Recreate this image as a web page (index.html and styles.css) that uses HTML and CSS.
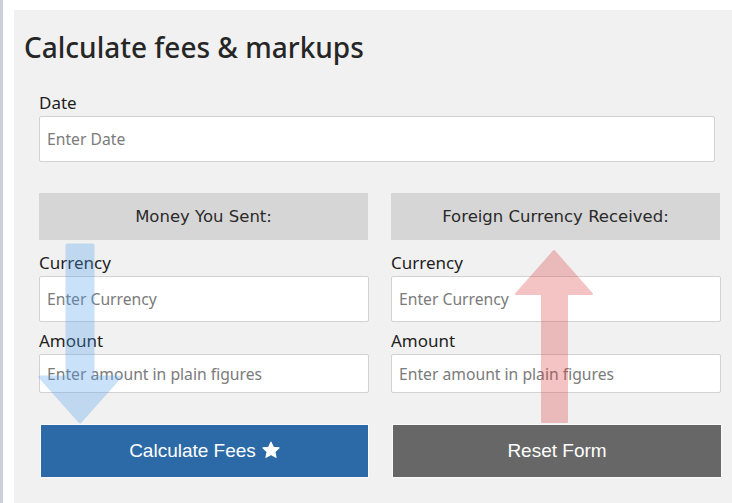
FILE: index.html
```html
<!DOCTYPE html>
<html lang="en">
<head>
    <meta charset="UTF-8">
    <meta name="viewport" content="width=device-width, initial-scale=1.0">
    <title>Calculate fees &amp; markups</title>
    <link rel="stylesheet" href="styles.css">
</head>
<body>
    <div class="side-bar"></div>
    <div class="page">
        <div class="panel">
            <h1>Calculate fees &amp; markups</h1>
            <form class="fee-form">
                <div class="date-group">
                    <label for="date">Date</label>
                    <input type="text" id="date" class="date-input" placeholder="Enter Date">
                </div>

                <div class="columns">
                    <div class="column">
                        <div class="column-head">Money You Sent:</div>
                        <label for="sentCurrency">Currency</label>
                        <input type="text" id="sentCurrency" class="field-tall" placeholder="Enter Currency">
                        <label for="sentAmount">Amount</label>
                        <input type="text" id="sentAmount" class="field-short" placeholder="Enter amount in plain figures">
                        <button type="submit" class="btn btn-primary">
                            Calculate Fees
                            <svg class="star" width="18" height="18" viewBox="0 0 24 24">
                                <polygon points="12,1.5 15.2,8.4 22.8,9.2 17.1,14.3 18.7,21.8 12,17.9 5.3,21.8 6.9,14.3 1.2,9.2 8.8,8.4" fill="white" stroke="white" stroke-width="1.5" stroke-linejoin="round"/>
                            </svg>
                        </button>
                    </div>
                    <div class="column">
                        <div class="column-head">Foreign Currency Received:</div>
                        <label for="recCurrency">Currency</label>
                        <input type="text" id="recCurrency" class="field-tall" placeholder="Enter Currency">
                        <label for="recAmount">Amount</label>
                        <input type="text" id="recAmount" class="field-short" placeholder="Enter amount in plain figures">
                        <button type="reset" class="btn btn-grey">Reset Form</button>
                    </div>
                </div>
            </form>
        </div>
    </div>

    <!-- annotation arrows drawn over the form -->
    <svg class="arrow arrow-down" width="90" height="190" viewBox="0 0 90 190">
        <path d="M29 3 H55 V135 H82 L42 180 L2 135 H29 Z" fill="rgb(80,160,240)" stroke="rgb(80,160,240)" stroke-width="3" stroke-linejoin="round"/>
    </svg>
    <svg class="arrow arrow-up" width="90" height="180" viewBox="0 0 90 180">
        <path d="M40 2 L78 45 H53 V173 H28 V45 H2 Z" fill="rgb(220,60,60)" stroke="rgb(220,60,60)" stroke-width="2" stroke-linejoin="round"/>
    </svg>
</body>
</html>
```

FILE: styles.css
```css
* {
    margin: 0;
    padding: 0;
    box-sizing: border-box;
}

body {
    position: relative;
    display: flex;
    min-height: 100vh;
    background-color: white;
    font-family: "Noto Sans", sans-serif;
    color: #222;
    overflow: hidden;
}

.side-bar {
    width: 3px;
    background-color: #cdd0dc;
}

.page {
    flex: 1;
    padding: 10px 0 0 11px;
}

.panel {
    background-color: #f1f1f1;
    min-height: 100%;
    padding: 18px 11px 20px 10px;
}

h1 {
    font-size: 28px;
    font-weight: 500;
    color: #262626;
    line-height: 38px;
}

.fee-form {
    padding-left: 15px;
    margin-top: 26px;
}

label {
    display: block;
    font-size: 17px;
    line-height: 22px;
    color: #1e1e1e;
}

input[type="text"] {
    display: block;
    width: 100%;
    background: white;
    border: 1px solid #d2d2d2;
    border-radius: 2px;
    padding: 0 7px;
    font-family: "Noto Sans", sans-serif;
    font-size: 15.7px;
    color: #333;
}

input::placeholder {
    color: #7b7b7b;
}

.date-group {
    width: 676px;
}

.date-input {
    height: 46px;
    margin-top: 2px;
}

.columns {
    display: grid;
    grid-template-columns: 330px 330px;
    column-gap: 22px;
    margin-top: 31px;
}

.column-head {
    width: 329px;
    height: 47px;
    background-color: #d6d6d6;
    font-family: "DejaVu Sans", sans-serif;
    font-size: 16.5px;
    color: #2a2a2a;
    display: flex;
    align-items: center;
    justify-content: center;
    margin-bottom: 12px;
}

.field-tall {
    height: 46px;
    margin-top: 2px;
    margin-bottom: 8px;
}

.field-short {
    height: 39px;
    margin-top: 2px;
}

.btn {
    display: flex;
    align-items: center;
    justify-content: center;
    gap: 6px;
    height: 54px;
    margin-top: 31px;
    margin-left: 1px;
    border: 1px solid #fafafa;
    color: white;
    font-family: "Liberation Sans", Arial, sans-serif;
    font-size: 19px;
    cursor: pointer;
}

.btn-primary {
    width: 329px;
    background-color: #2b6aa6;
}

.btn-grey {
    width: 330px;
    background-color: #676767;
}

.star {
    margin-top: -2px;
}

.arrow {
    position: absolute;
    pointer-events: none;
    opacity: 0.3;
}

.arrow-down {
    left: 38px;
    top: 242px;
}

.arrow-up {
    left: 514px;
    top: 249px;
}
```
